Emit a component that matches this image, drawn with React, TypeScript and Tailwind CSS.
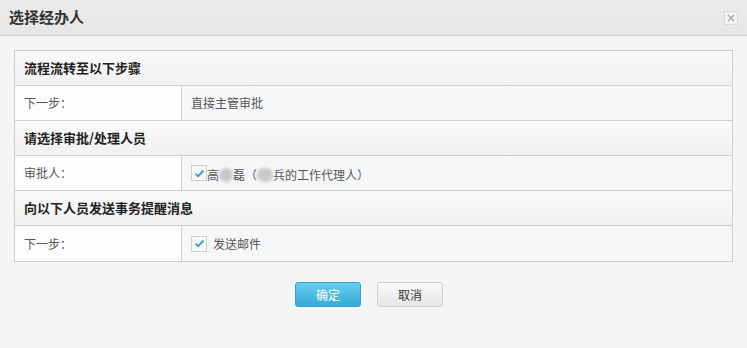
const font = "font-['Microsoft_YaHei','Noto_Sans_CJK_SC',sans-serif]";

function Check() {
  return (
    <span className="inline-flex h-[16px] w-[16px] shrink-0 items-center justify-center border border-[#d0d0d0] bg-[#f7f7f7]">
      <svg width="11" height="9" viewBox="0 0 11 9">
        <path d="M1.5 4.8 L4.2 7.2 L9.5 1.5" fill="none" stroke="#3aa6cc" strokeWidth="2" />
      </svg>
    </span>
  );
}

function Blur({ w }: { w: number }) {
  return (
    <span
      className="inline-block h-[14px] rounded-full bg-[#c9c9c9] blur-[1.5px]"
      style={{ width: w }}
    />
  );
}

function HeadRow({ title }: { title: string }) {
  return (
    <div className="flex h-[35px] items-center border-b border-[#d0d0d0] bg-gradient-to-b from-[#f9f9f9] to-[#f1f1f1] pl-[9px] text-[13px] font-bold text-[#222]">
      {title}
    </div>
  );
}

function DataRow({ label, children, last }: { label: string; children: React.ReactNode; last?: boolean }) {
  return (
    <div className={`flex h-[35px] ${last ? "" : "border-b border-[#d0d0d0]"}`}>
      <div className="flex w-[167px] items-center border-r border-[#d0d0d0] bg-[#fdfdfd] pl-[9px] text-[12px] text-[#555]">
        {label}
      </div>
      <div className="flex flex-1 items-center bg-[#f6f7f9] pl-[9px] text-[12px] text-[#555]">{children}</div>
    </div>
  );
}

export default function App() {
  return (
    <div className={`h-[348px] w-[747px] bg-[#f4f5f7] ${font}`}>
      <div className="flex h-[36px] items-center justify-between border-b border-[#cfcfcf] bg-gradient-to-b from-[#ececec] to-[#e6e6e6] pl-[9px] pr-[9px]">
        <span className="text-[15px] font-semibold text-[#333]">选择经办人</span>
        <span className="flex h-[14px] w-[14px] items-center justify-center border border-[#d8d8d8] bg-[#f3f3f3]">
          <svg width="8" height="8" viewBox="0 0 8 8">
            <path d="M1 1 L7 7 M7 1 L1 7" stroke="#a9a9a9" strokeWidth="1.4" />
          </svg>
        </span>
      </div>

      <div className="mx-[14px] mt-[14px] border border-[#cdcdcd]">
        <HeadRow title="流程流转至以下步骤" />
        <DataRow label="下一步：">直接主管审批</DataRow>
        <HeadRow title="请选择审批/处理人员" />
        <DataRow label="审批人：">
          <Check />
          <span className="flex items-center pt-[4px]">
            高<Blur w={14} />磊（<Blur w={16} />兵的工作代理人）
          </span>
        </DataRow>
        <HeadRow title="向以下人员发送事务提醒消息" />
        <DataRow label="下一步：" last>
          <Check />
          <span className="ml-[6px]">发送邮件</span>
        </DataRow>
      </div>

      <div className="mt-[20px] flex justify-center gap-[16px] pr-[9px]">
        <button className="h-[25px] w-[66px] rounded-[3px] border border-[#3c9fc6] bg-gradient-to-b from-[#64cdee] to-[#35abd6] text-[12px] text-white">
          确定
        </button>
        <button className="h-[25px] w-[66px] rounded-[3px] border border-[#cfcfcf] bg-gradient-to-b from-[#fafafa] to-[#e6e6e6] text-[12px] text-[#333]">
          取消
        </button>
      </div>
    </div>
  );
}
